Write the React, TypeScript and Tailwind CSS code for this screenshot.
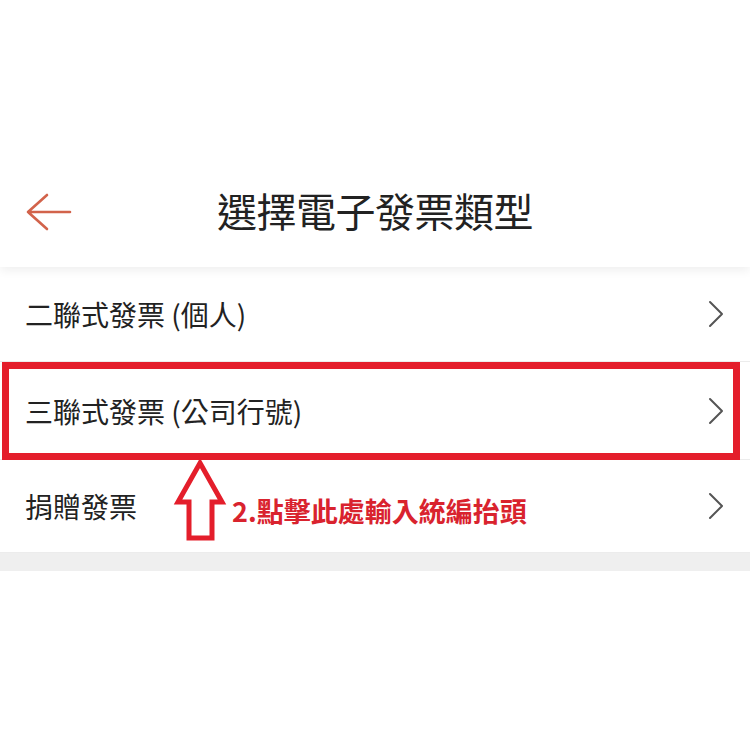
const cjk = { fontFamily: '"Noto Sans CJK TC", "Noto Sans CJK SC", sans-serif' };

function Chevron() {
  return (
    <svg width="18" height="28" viewBox="0 0 18 28" fill="none" className="shrink-0">
      <path d="M3 2 L15 14 L3 26" stroke="#555" strokeWidth="2" strokeLinecap="round" strokeLinejoin="round" />
    </svg>
  );
}

function Row({ label, children, height }: { label: string; children?: React.ReactNode; height: string }) {
  return (
    <div className={`relative flex items-center justify-between pl-[25px] pr-[25px] border-b border-[#ececec] ${height}`}>
      <span className="text-[28px] text-[#222] leading-none">{label}</span>
      <Chevron />
      {children}
    </div>
  );
}

export default function App() {
  return (
    <div className="relative w-[750px] h-[750px] bg-white overflow-hidden" style={cjk}>
      {/* header */}
      <div className="relative z-10 h-[267px] flex flex-col justify-end pb-[27px] bg-white shadow-[0_3px_10px_rgba(0,0,0,0.07)]">
        <div className="relative h-[60px] flex items-center justify-center">
          <svg width="48" height="40" viewBox="0 0 48 40" fill="none" className="absolute left-[25px] top-[12px]">
            <path d="M3 20 H45 M22 3 L3 20 L22 37" stroke="#d2634b" strokeWidth="2.6" strokeLinecap="round" strokeLinejoin="round" />
          </svg>
          <h1 className="text-[40px] text-[#222] font-normal leading-none tracking-[-0.5px]">選擇電子發票類型</h1>
        </div>
      </div>

      <Row label="二聯式發票 (個人)" height="h-[95px]" />
      <Row label="三聯式發票 (公司行號)" height="h-[98px]">
        <div className="absolute left-[2px] right-[10px] top-0 -bottom-px border-[7px] border-[#e41e2b]" />
      </Row>
      <Row label="捐贈發票" height="h-[93px]" />
      <div className="h-[18px] bg-[#efefef]" />

      {/* annotation */}
      <svg width="60" height="90" viewBox="0 0 60 90" fill="none" className="absolute left-[170px] top-[455px]">
        <path d="M30 8 L52 47 L42 47 L42 83 L19 83 L19 47 L8 47 Z" stroke="#e41e2b" strokeWidth="5" strokeLinejoin="miter" />
      </svg>
      <div className="absolute left-[232px] top-[497px] text-[27px] font-bold leading-none text-[#d9232e]">2.點擊此處輸入統編抬頭</div>
    </div>
  );
}
